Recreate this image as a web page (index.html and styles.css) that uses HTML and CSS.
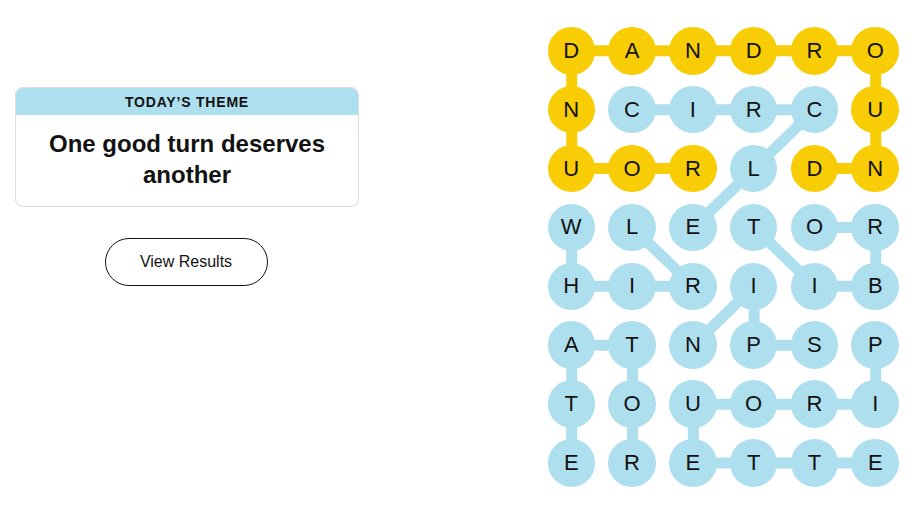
FILE: index.html
```html
<!DOCTYPE html>
<html lang="en">
<head>
<meta charset="utf-8">
<title>Strands</title>
<link rel="stylesheet" href="styles.css">
</head>
<body>
<main class="page">
  <section class="left">
    <div class="theme-card">
      <div class="theme-head">TODAY’S THEME</div>
      <div class="theme-body">One good turn deserves another</div>
    </div>
    <button class="results-btn" type="button">View Results</button>
  </section>
  <section class="board">
    <svg class="links" viewBox="0 0 351.5 459.8" width="351.5" height="459.8" aria-hidden="true">
      <g stroke="#f8cd05" stroke-width="11" stroke-linecap="butt" fill="none">
        <line x1="23.75" y1="23.75" x2="327.75" y2="23.75"/>
        <line x1="23.75" y1="23.75" x2="23.75" y2="141.55"/>
        <line x1="23.75" y1="141.55" x2="145.35" y2="141.55"/>
        <line x1="327.75" y1="23.75" x2="327.75" y2="141.55"/>
        <line x1="266.95" y1="141.55" x2="327.75" y2="141.55"/>
      </g>
      <g stroke="#aedfee" stroke-width="11" stroke-linecap="butt" fill="none">
        <line x1="84.55" y1="82.65" x2="266.95" y2="82.65"/>
        <line x1="266.95" y1="82.65" x2="145.35" y2="200.45"/>
        <line x1="23.75" y1="200.45" x2="23.75" y2="259.35"/>
        <line x1="23.75" y1="259.35" x2="145.35" y2="259.35"/>
        <line x1="145.35" y1="259.35" x2="84.55" y2="200.45"/>
        <line x1="266.95" y1="200.45" x2="327.75" y2="200.45"/>
        <line x1="327.75" y1="200.45" x2="327.75" y2="259.35"/>
        <line x1="327.75" y1="259.35" x2="266.95" y2="259.35"/>
        <line x1="266.95" y1="259.35" x2="206.15" y2="200.45"/>
        <line x1="266.95" y1="318.25" x2="206.15" y2="318.25"/>
        <line x1="206.15" y1="318.25" x2="206.15" y2="259.35"/>
        <line x1="206.15" y1="259.35" x2="145.35" y2="318.25"/>
        <line x1="84.55" y1="318.25" x2="84.55" y2="436.05"/>
        <line x1="23.75" y1="318.25" x2="84.55" y2="318.25"/>
        <line x1="23.75" y1="318.25" x2="23.75" y2="436.05"/>
        <line x1="327.75" y1="318.25" x2="327.75" y2="377.15"/>
        <line x1="145.35" y1="377.15" x2="327.75" y2="377.15"/>
        <line x1="145.35" y1="377.15" x2="145.35" y2="436.05"/>
        <line x1="145.35" y1="436.05" x2="327.75" y2="436.05"/>
      </g>
    </svg>
    <div class="grid">
      <span class="cell span">D</span><span class="cell span">A</span><span class="cell span">N</span><span class="cell span">D</span><span class="cell span">R</span><span class="cell span">O</span>
      <span class="cell span">N</span><span class="cell found">C</span><span class="cell found">I</span><span class="cell found">R</span><span class="cell found">C</span><span class="cell span">U</span>
      <span class="cell span">U</span><span class="cell span">O</span><span class="cell span">R</span><span class="cell found">L</span><span class="cell span">D</span><span class="cell span">N</span>
      <span class="cell found">W</span><span class="cell found">L</span><span class="cell found">E</span><span class="cell found">T</span><span class="cell found">O</span><span class="cell found">R</span>
      <span class="cell found">H</span><span class="cell found">I</span><span class="cell found">R</span><span class="cell found">I</span><span class="cell found">I</span><span class="cell found">B</span>
      <span class="cell found">A</span><span class="cell found">T</span><span class="cell found">N</span><span class="cell found">P</span><span class="cell found">S</span><span class="cell found">P</span>
      <span class="cell found">T</span><span class="cell found">O</span><span class="cell found">U</span><span class="cell found">O</span><span class="cell found">R</span><span class="cell found">I</span>
      <span class="cell found">E</span><span class="cell found">R</span><span class="cell found">E</span><span class="cell found">T</span><span class="cell found">T</span><span class="cell found">E</span>
    </div>
  </section>
</main>
</body>
</html>
```

FILE: styles.css
```css
* { box-sizing: border-box; }

html, body {
  margin: 0;
  padding: 0;
  background: #ffffff;
  color: #121212;
  font-family: "Liberation Sans", Arial, sans-serif;
}

.page {
  display: flex;
  justify-content: space-between;
  width: 913px;
  height: 513px;
  padding: 0 14px 0 15px;
}

.left {
  width: 344px;
  padding-top: 87px;
  display: flex;
  flex-direction: column;
  align-items: center;
}

.theme-card {
  width: 100%;
  border: 1px solid #dcdcdc;
  border-radius: 8px;
  overflow: hidden;
}

.theme-head {
  height: 27px;
  background: #aedfee;
  text-align: center;
  font-size: 14px;
  font-weight: 700;
  letter-spacing: 0.8px;
  line-height: 28px;
}

.theme-body {
  padding: 13px 20px 16px;
  text-align: center;
  font-size: 24px;
  font-weight: 700;
  line-height: 31px;
}

.results-btn {
  margin-top: 31px;
  margin-right: 2px;
  width: 163px;
  height: 48px;
  border: 1px solid #121212;
  border-radius: 24px;
  background: #ffffff;
  color: #121212;
  font-family: "Liberation Sans", Arial, sans-serif;
  font-size: 16px;
  padding: 0;
}

.board {
  position: relative;
  margin-top: 27px;
  width: 351.5px;
  height: 459.8px;
}

.links {
  position: absolute;
  left: 0;
  top: 0;
}

.grid {
  position: relative;
  display: grid;
  grid-template-columns: repeat(6, 47.5px);
  grid-auto-rows: 47.5px;
  column-gap: 13.3px;
  row-gap: 11.4px;
}

.cell {
  display: flex;
  align-items: center;
  justify-content: center;
  border-radius: 50%;
  font-size: 22px;
  line-height: 1;
  color: #121212;
}

.cell.span { background: #f8cd05; }
.cell.found { background: #aedfee; }
```
